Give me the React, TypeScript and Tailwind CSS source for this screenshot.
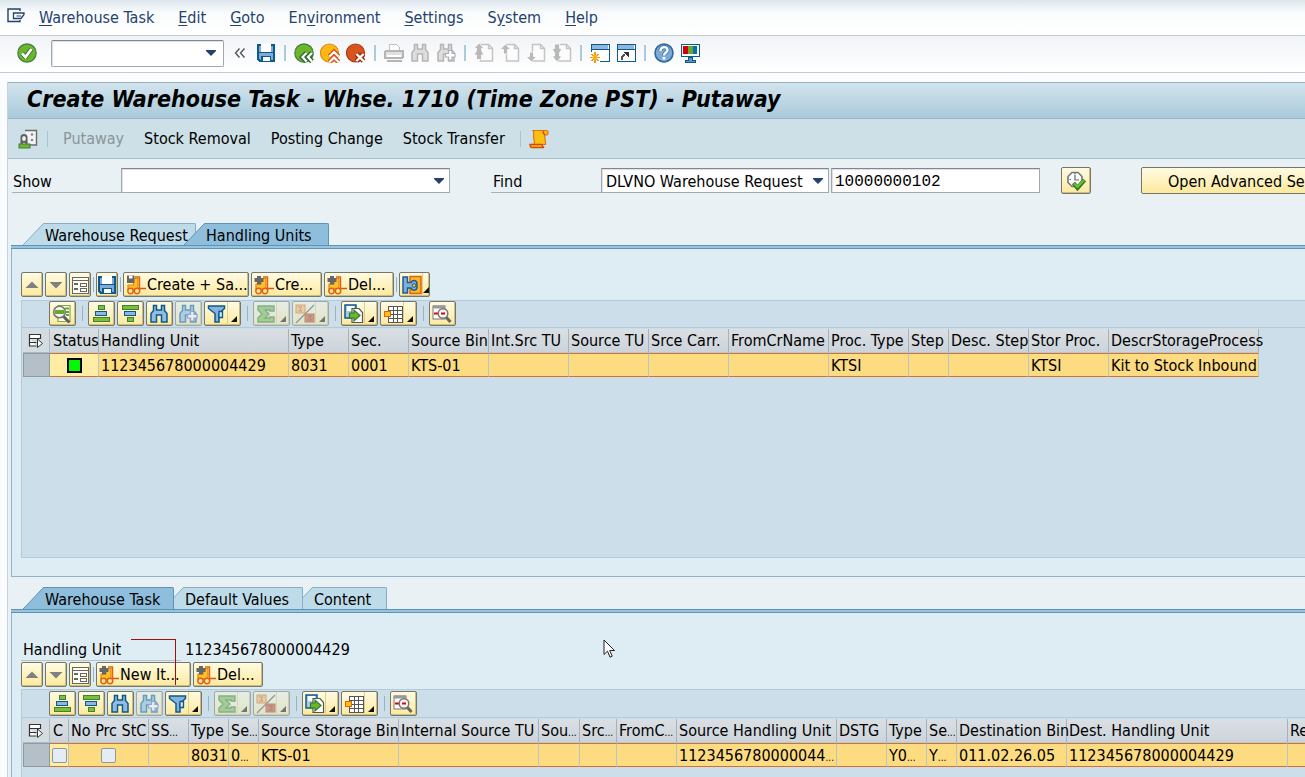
import type { ReactNode } from "react";
import clsx from "clsx";

interface IconProps {
  children: ReactNode;
  crisp?: boolean;
}

function Icon({ children, crisp }: IconProps) {
  return (
    <svg width="20" height="20" viewBox="0 0 20 20" fill="none" className="shrink-0" shapeRendering={crisp ? "crispEdges" : "auto"} aria-hidden="true">
      {children}
    </svg>
  );
}

/* ---------- icons ---------- */

const CheckIcon = () => (
  <Icon>
    <circle cx="10" cy="10" r="9.2" fill="#6db52c" stroke="#3f7f3f" strokeWidth="1.2" />
    <path d="M5 10.5L8.500 14L14.500 6" stroke="#2f6b2f" strokeWidth="4.4" strokeLinejoin="round" />
    <path d="M5 10.5L8.500 14L14.500 6" stroke="#fff" strokeWidth="2.8" />
  </Icon>
);

const SaveIcon = () => (
  <Icon crisp>
    <path d="M2 2h16v16H4l-2-2z" fill="#7fa9d6" stroke="#0b5a8e" strokeWidth="2" />
    <rect x="5" y="1" width="10" height="9" fill="#fff" />
    <rect x="3" y="9" width="14" height="1" fill="#0b5a8e" />
    <rect x="5" y="13" width="10" height="5" fill="#0b5a8e" />
    <rect x="7" y="14" width="7" height="4" fill="#fff" />
  </Icon>
);

const BackIcon = () => (
  <Icon>
    <circle cx="10" cy="10" r="9.2" fill="#6db52c" stroke="#3f7f3f" strokeWidth="1.2" />
    <path d="M12.500 10l-4 4 4 4.500M18 10l-4 4 4 4.500" stroke="#2f6b2f" strokeWidth="5" />
    <path d="M12.500 10l-4 4 4 4.500M18 10l-4 4 4 4.500" stroke="#fff" strokeWidth="2.2" />
  </Icon>
);

const ExitIcon = () => (
  <Icon>
    <circle cx="9.5" cy="10" r="9" fill="#fdb913" stroke="#e08a10" strokeWidth="1.2" />
    <path d="M9.500 13.500l4.500-4.500 4.500 4.500M9.500 19l4.500-4.500 4.500 4.500" stroke="#d9541a" strokeWidth="5" />
    <path d="M9.500 13.500l4.500-4.500 4.500 4.500M9.500 19l4.500-4.500 4.500 4.500" stroke="#fff" strokeWidth="2.2" />
  </Icon>
);

const CancelIcon = () => (
  <Icon>
    <circle cx="9.5" cy="10" r="9" fill="#d9531e" stroke="#b03a10" strokeWidth="1.2" />
    <path d="M10.500 11l7 7M17.500 11l-7 7" stroke="#a02c08" strokeWidth="5" />
    <path d="M10.500 11l7 7M17.500 11l-7 7" stroke="#fff" strokeWidth="2.4" />
  </Icon>
);

const PrintIcon = () => (
  <Icon crisp>
    <path d="M5 7V1h7l3 3v4" fill="#fff" stroke="#c0c0c0" />
    <rect x="1" y="8" width="18" height="7" rx="1" fill="#e0e0e0" stroke="#b5b5b5" strokeWidth="2" />
    <rect x="3" y="12" width="14" height="2" fill="#fff" />
    <rect x="3" y="17" width="15" height="2" fill="#b5b5b5" />
  </Icon>
);

function BinocularShape({ stroke, fill }: { stroke: string; fill: string }) {
  return (
    <path
      d="M4.500 1.500h3v4.500h5V1.500h3v5l2.500 3v8.500h-5.500V11h-5v7H2V9.500l2.500-3z"
      fill={fill}
      stroke={stroke}
      strokeWidth="1.5"
    />
  );
}

const FindIcon = ({ gray }: { gray?: boolean }) => (
  <Icon>
    <BinocularShape stroke={gray ? "#b5b5b5" : "#0b5a8e"} fill={gray ? "#dddddd" : "#93bce0"} />
  </Icon>
);

const FindNextIcon = ({ gray }: { gray?: boolean }) => (
  <Icon>
    <BinocularShape stroke={gray ? "#b5b5b5" : "#0b5a8e"} fill={gray ? "#dddddd" : "#93bce0"} />
    <path d="M12.500 7.500h3.500v3h3v3.500h-3v3h-3.500v-3h-3v-3.500h3z" fill="#fff" stroke={gray ? "#b0b0b0" : "#5d6db0"} strokeWidth="1.2" />
  </Icon>
);

function PageIcon({ arrows }: { arrows: string }) {
  return (
    <Icon>
      <path d="M6.500 1.500h8l4 4v12.500h-12z" fill="#fcfcfc" stroke="#c4c4c4" strokeWidth="1.5" />
      <path d="M14.500 1.500v4h4" stroke="#c4c4c4" strokeWidth="1.5" />
      <path d={arrows} fill="#b9b9b9" stroke="#fff" strokeWidth="0.8" />
    </Icon>
  );
}

const FirstPageIcon = () => <PageIcon arrows="M5 0l5 5.500H7.500v2L10 12H7.500v4.500h-5V12H0l2.500-4.500v-2H0z" />;
const PrevPageIcon = () => <PageIcon arrows="M5.500 1l5 5.500h-3V11h-4V6.500H0z" />;
const NextPageIcon = () => <PageIcon arrows="M3.500 9h4v4.500h3l-5 5.500L0 13.500h3.500z" />;
const LastPageIcon = () => <PageIcon arrows="M2.500 1h5v4.500H10L7.500 10v3H10l-5 6-5-6h2.500v-3L0 5.500h2.500z" />;

const NewSessionIcon = () => (
  <Icon crisp>
    <rect x="1" y="1" width="18" height="17" fill="#fff" stroke="#0b5a8e" strokeWidth="1" />
    <rect x="2" y="2" width="16" height="4" fill="#8db7de" />
    <rect x="1" y="6" width="18" height="1" fill="#0b5a8e" />
    <rect x="0" y="9" width="10" height="10" fill="#fff" />
    <path d="M5 9v11M0 14.500h10M1.500 11l7 7M8.500 11l-7 7" stroke="#f39a12" strokeWidth="1.5" />
    <circle cx="5" cy="14.5" r="2.5" fill="#f9b01e" />
  </Icon>
);

const ShortcutIcon = () => (
  <Icon crisp>
    <rect x="1" y="1" width="18" height="17" fill="#fff" stroke="#0b5a8e" strokeWidth="1" />
    <rect x="2" y="2" width="16" height="4" fill="#8db7de" />
    <rect x="1" y="6" width="18" height="1" fill="#0b5a8e" />
    <path d="M6 17c-1-3.500 1-5 3-5" stroke="#555" strokeWidth="2" />
    <path d="M7 9h5.500v5.500z" fill="#333" />
  </Icon>
);

const HelpIcon = () => (
  <Icon>
    <circle cx="10" cy="10" r="9" fill="#7da9d4" stroke="#2a6a9c" strokeWidth="1.6" />
    <path d="M6.500 8c0-5 7-5 7-1 0 2.500-3.500 2.500-3.500 5.500" stroke="#3a6ea5" strokeWidth="4" />
    <path d="M6.500 8c0-5 7-5 7-1 0 2.500-3.500 2.500-3.500 5.500" stroke="#fff" strokeWidth="2.4" />
    <rect x="8.7" y="14" width="2.6" height="2.6" fill="#fff" />
  </Icon>
);

const MonitorIcon = () => (
  <Icon crisp>
    <rect x="1" y="1" width="18" height="12" fill="#fff" stroke="#0b5a8e" strokeWidth="1" />
    <rect x="3" y="3" width="5" height="8" fill="#d40000" />
    <rect x="8" y="3" width="5" height="8" fill="#6aa82a" />
    <rect x="13" y="3" width="4" height="8" fill="#0070b8" />
    <path d="M8 14h4v3h3v2H5v-2h3z" fill="#5c93c0" stroke="#0b5a8e" />
  </Icon>
);

const ExitMenuIcon = () => (
  <svg width="19" height="15" viewBox="0 0 19 15" fill="none" aria-hidden="true">
    <path d="M13 3V1H1v12.500h12V12" stroke="#24426b" strokeWidth="1.4" />
    <path d="M6.500 5h10.500v1.500l-3 4H6.500z" fill="#fff" stroke="#24426b" strokeWidth="1.3" />
    <path d="M9.500 8h4.500" stroke="#24426b" />
  </svg>
);

const PersonCardIcon = () => (
  <Icon>
    <path d="M7 1.500h11.500v14.500H11" fill="#f4f4f4" stroke="#6b6b6b" strokeWidth="1.4" />
    <circle cx="14" cy="5.500" r="1.3" fill="#8a8a8a" />
    <circle cx="14" cy="11" r="1.3" fill="#8a8a8a" />
    <path d="M2.500 15V8c0-4 7-4 7 0v7z" fill="#5f5f5f" />
    <ellipse cx="6" cy="9.500" rx="1.9" ry="2.6" fill="#f0f0f0" />
    <path d="M4 15.500l2-2 2 2z" fill="#fff" />
    <rect x="1" y="15" width="11" height="4" fill="#6db52c" stroke="#3f7f3f" />
  </Icon>
);

const ScrollIcon = () => (
  <Icon>
    <path d="M4 1.500h13.500c2 0 2 4.500 0 4.500H16c-1 3 1 6 .5 9.500H5c1.500-3-.5-5-.5-8S5.500 4 4 1.500z" fill="#fdc010" stroke="#e0701a" strokeWidth="1.2" />
    <path d="M14.500 2c-.5 1.500 0 3 1.500 4" stroke="#cf4a10" strokeWidth="1.4" />
    <path d="M1 15.500h12c0 1.500 1 2.500 2 3H3c-1.500 0-2-1.500-2-3z" fill="#fdc010" stroke="#cf4a10" strokeWidth="1.4" />
  </Icon>
);

const ClockCheckIcon = () => (
  <Icon>
    <path d="M6 1.500h6l4 4v6l-4 4H6l-4-4v-6z" fill="#fff" stroke="#777" strokeWidth="1.6" />
    <path d="M9 4v5h4M9 2v1.500M3.500 8.500H5" stroke="#666" strokeWidth="1.2" />
    <path d="M7.500 12l4 5 7-8" stroke="#2f7a2f" strokeWidth="4.2" />
    <path d="M8 12.500l3.500 3.500 6.500-7" stroke="#74bd2e" strokeWidth="2.2" />
  </Icon>
);

const UpIcon = () => (
  <Icon><path d="M10 6.500l6.500 6.500h-13z" fill="#808080" /></Icon>
);

const DownIcon = () => (
  <Icon><path d="M10 13.500L3.500 7h13z" fill="#808080" /></Icon>
);

const FormIcon = () => (
  <Icon crisp>
    <rect x="2" y="2" width="16" height="16" fill="#fffdf0" stroke="#666" strokeWidth="1" />
    <path d="M2 5h16" stroke="#666" strokeWidth="1" />
    <path d="M4 9h4M4 14h4" stroke="#666" strokeWidth="2" />
    <rect x="10" y="8" width="6" height="3" stroke="#666" />
    <rect x="10" y="13" width="6" height="3" stroke="#666" />
  </Icon>
);

const ForkliftIcon = () => (
  <Icon>
    <path d="M9 2h4.500v13" stroke="#e0620f" strokeWidth="1.4" />
    <path d="M2 9h5V3.500h5V14H2z" fill="#fdbf2a" stroke="#e8820f" strokeWidth="1.2" />
    <path d="M14 13.500h6" stroke="#d9541a" strokeWidth="1.5" />
    <circle cx="4.5" cy="16" r="2.7" fill="#ffe9a0" stroke="#e0620f" strokeWidth="1.5" />
    <circle cx="11" cy="16" r="2.7" fill="#ffe9a0" stroke="#e0620f" strokeWidth="1.5" />
    <path d="M3 1h4v2h2.500v4H7v2.500H3V7H.5V3H3z" fill="#666" />
  </Icon>
);

const ForkliftSaveIcon = () => (
  <Icon>
    <path d="M9 2h4.500v13" stroke="#e0620f" strokeWidth="1.4" />
    <path d="M2 10h5.500V3.500H12V14H2z" fill="#fdbf2a" stroke="#e8820f" strokeWidth="1.2" />
    <path d="M14 13.500h6" stroke="#d9541a" strokeWidth="1.5" />
    <circle cx="4.5" cy="16" r="2.7" fill="#ffe9a0" stroke="#e0620f" strokeWidth="1.5" />
    <circle cx="11" cy="16" r="2.7" fill="#ffe9a0" stroke="#e0620f" strokeWidth="1.5" />
    <path d="M1 .5h7.500V8H1z" fill="#666" />
    <path d="M3 .5h3.500v3H3z" fill="#fff" />
  </Icon>
);

const TransferIcon = () => (
  <Icon>
    <rect x="8" y="1.500" width="11" height="17" fill="#fdb920" stroke="#e0620f" strokeWidth="1.5" />
    <path d="M1 2h4.500v5.500H9c1-3 6-3 6 1.500v3c0 4-5 4-6 1H5.500v5H1z" fill="#7fb0dc" stroke="#1b5c92" strokeWidth="1.5" />
    <circle cx="12" cy="10.5" r="1.8" fill="#fdb920" stroke="#1b5c92" />
  </Icon>
);

const DetailIcon = () => (
  <Icon>
    <path d="M6 1.500h12v16H6z" fill="#fff" stroke="#7fae3a" strokeWidth="1.2" />
    <path d="M13 4.500h4M14 8h3M14 11h3" stroke="#6aa82a" strokeWidth="1.8" />
    <path d="M11.500 12.500l6 6" stroke="#5f5f5f" strokeWidth="3" />
    <circle cx="7.5" cy="8" r="5.8" fill="#f3f3f3" stroke="#777" strokeWidth="1.6" />
    <path d="M3 6h9.500v4H3z" fill="#6aa82a" />
  </Icon>
);

const SortAscIcon = () => (
  <Icon crisp>
    <rect x="7" y="1" width="6" height="4" fill="#7cbf33" stroke="#3f7f3f" />
    <rect x="4" y="7" width="11" height="4" fill="#8db7de" stroke="#0b5a8e" />
    <rect x="2" y="13" width="16" height="4" fill="#7cbf33" stroke="#3f7f3f" />
  </Icon>
);

const SortDescIcon = () => (
  <Icon crisp>
    <rect x="2" y="1" width="16" height="4" fill="#7cbf33" stroke="#3f7f3f" />
    <rect x="4" y="7" width="11" height="4" fill="#8db7de" stroke="#0b5a8e" />
    <rect x="7" y="13" width="6" height="4" fill="#7cbf33" stroke="#3f7f3f" />
  </Icon>
);

const FilterIcon = () => (
  <Icon>
    <path d="M1.500 2h16v2.500l-5.500 5V18H8V9.500l-6.500-5z" fill="#86b2dc" stroke="#0b5a8e" strokeWidth="1.5" />
    <path d="M12 7.500h3.500v6H12z" fill="#d6e6f4" stroke="#0b5a8e" strokeWidth="1.3" />
  </Icon>
);

const SumIcon = () => (
  <Icon>
    <path d="M2 2h16v5h-4V6H9l4 4-4 4h5v-1h4v5H2v-4l4-4-4-4z" fill="#7cbf33" stroke="#3f7f3f" strokeWidth="1.4" />
  </Icon>
);

const SubtotalIcon = () => (
  <Icon>
    <path d="M19 1L1 19" stroke="#555" strokeWidth="1.3" />
    <rect x="1" y="1" width="9" height="8" fill="#fdc060" stroke="#e0700f" />
    <path d="M3 3h4l-2 2 2 2H3" stroke="#d0601a" />
    <rect x="10" y="10" width="9" height="8" fill="#d9531e" stroke="#a83a10" />
    <path d="M12.500 12h4l-2 2 2 2h-4" stroke="#8a2a10" />
  </Icon>
);

const ExportIcon = () => (
  <Icon>
    <rect x="1" y="1" width="11" height="13" fill="#a9cbe8" stroke="#0b5a8e" strokeWidth="1.5" />
    <rect x="3" y="2" width="7" height="5" fill="#fff" />
    <path d="M8 18.500V4.500h7l3.500 4v10z" fill="#fff" stroke="#555" strokeWidth="1.2" />
    <path d="M5.500 9h4.500V6l6 5.500-6 5.500v-3H5.500z" fill="#6db52c" stroke="#2f7a2f" strokeWidth="1.2" />
  </Icon>
);

const LayoutIcon = () => (
  <Icon crisp>
    <path d="M5 2h14v16H5z" fill="#fff" stroke="#555" />
    <path d="M5 6h14M5 10h14M5 14h14M10 2v16M14 2v16" stroke="#555" />
    <rect x="1" y="7" width="6" height="5" fill="#fdc010" stroke="#e0620f" strokeWidth="1" />
  </Icon>
);

const ViewIcon = () => (
  <Icon>
    <rect x="1" y="2" width="12" height="13" fill="#fff" stroke="#777" strokeWidth="1" />
    <rect x="1" y="1.500" width="12" height="3" fill="#999" />
    <path d="M2 9.500h4" stroke="#e00000" strokeWidth="2" />
    <path d="M14 13l4.500 5" stroke="#666" strokeWidth="3" />
    <circle cx="11" cy="9.5" r="4.8" fill="#f6f6f6" stroke="#777" strokeWidth="1.5" />
    <path d="M9 9.500h4" stroke="#e00000" strokeWidth="2" />
  </Icon>
);

const SelectAllIcon = () => (
  <svg width="16" height="16" viewBox="0 0 16 16" fill="none" className="mx-auto" aria-hidden="true">
    <path d="M1.500 1.500h11v4h-11zM1.500 5.500v7.500h7M1.500 9.500h7" fill="#fff" stroke="#333" strokeWidth="1.2" />
    <path d="M9.500 6l5 4.500-5 4z" fill="#fff" stroke="#333" />
  </svg>
);

/* ---------- controls ---------- */

interface ToolButtonProps {
  name: string;
  icon: ReactNode;
  label?: string;
  size?: "narrow" | "normal" | "split";
  menu?: boolean;
  disabled?: boolean;
  className?: string;
}

function ToolButton({ name, icon, label, size = "normal", menu, disabled, className }: ToolButtonProps) {
  return (
    <button
      type="button"
      aria-label={name}
      disabled={disabled}
      className={clsx(
        "flex h-[25px] shrink-0 items-center rounded-[2px] border border-[#77766a] bg-linear-to-b from-[#fffbe2] to-[#fde99c] shadow-[inset_-1px_-1px_0_#c9bd83]",
        size === "narrow" && "w-[22px]",
        !label && !className && size === "normal" && "w-[27px]",
        size === "split" && "w-[37px]",
        size !== "narrow" && "px-[2px]",
        disabled && "opacity-50",
        className
      )}
    >
      {icon}
      {label && <span className="pl-px whitespace-nowrap">{label}</span>}
      {menu && (
        <span className="flex h-full flex-1 items-end justify-end border-l border-[#e0cf8c] pr-px pb-[3px]">
          <svg width="6" height="6" viewBox="0 0 6 6" aria-hidden="true"><path d="M6 0v6H0z" fill="#111" /></svg>
        </span>
      )}
    </button>
  );
}

const Divider = () => <span className="h-[15px] w-px shrink-0 bg-[#9fb0bb]" />;
const BarSeparator = () => <span className="mx-[2px] h-4 w-[2px] bg-[#a9cadf]" />;

const GridSeparator = () => (
  <span className="flex h-[25px] w-2 shrink-0 items-center justify-center"><Divider /></span>
);

function IconButton({ name, children, disabled }: { name: string; children: ReactNode; disabled?: boolean }) {
  return <button type="button" aria-label={name} disabled={disabled}>{children}</button>;
}

function GridToolbar({ details }: { details?: boolean }) {
  return (
    <div className="flex h-[27px] items-start gap-[2px] border-b border-[#b3cad8] pl-[27px]">
      {details && (
        <>
          <ToolButton name="Details" icon={<DetailIcon />} />
          <GridSeparator />
        </>
      )}
      <ToolButton name="Sort ascending" icon={<SortAscIcon />} />
      <ToolButton name="Sort descending" icon={<SortDescIcon />} />
      <ToolButton name="Find" icon={<FindIcon />} />
      <ToolButton name="Find next" icon={<FindNextIcon />} disabled />
      <ToolButton name="Filter" icon={<FilterIcon />} size="split" menu />
      <GridSeparator />
      <ToolButton name="Total" icon={<SumIcon />} size="split" menu disabled />
      <ToolButton name="Subtotal" icon={<SubtotalIcon />} size="split" menu disabled />
      <GridSeparator />
      <ToolButton name="Export" icon={<ExportIcon />} size="split" menu />
      <ToolButton name="Change layout" icon={<LayoutIcon />} size="split" menu />
      <GridSeparator />
      <ToolButton name="Views" icon={<ViewIcon />} />
    </div>
  );
}

function Tab({ label, active, className }: { label: string; active?: boolean; className: string }) {
  const fill = active ? "#8fbddc" : "#bddbe9";
  const stroke = active ? "#5f93b5" : "#86adc4";
  return (
    <button type="button" role="tab" aria-selected={!!active} className={clsx("flex h-[22px]", className)}>
      <svg width="21" height="22" viewBox="0 0 21 22" className="shrink-0" aria-hidden="true">
        <path d="M0 22L3 19L19 2Q20 0.500 21 0.500V22z" fill={fill} />
        <path d="M0 22L3 19L19 2Q20 0.500 21 0.500" fill="none" stroke={stroke} />
      </svg>
      <span
        className={clsx(
          "h-full flex-1 rounded-tr-[2px] border-t border-r pl-px text-left leading-[23px] whitespace-nowrap",
          active ? "border-[#5f93b5] bg-[#8fbddc]" : "border-[#86adc4] bg-[#bddbe9]"
        )}
      >
        {label}
      </span>
    </button>
  );
}

const TabLine = () => <div className="h-1 shrink-0 border-y border-[#5f93b5] bg-[#98c4e0]" />;

interface Column {
  title: string;
  width: number;
  value?: ReactNode;
  cut?: boolean;
  valueCut?: boolean;
  pale?: boolean;
}

const unitColumns: Column[] = [
  { title: "Status", width: 49, value: <span className="mx-auto block size-[15px] border-2 border-black bg-[#00f800]" />, pale: true },
  { title: "Handling Unit", width: 190, value: "112345678000004429" },
  { title: "Type", width: 60, value: "8031" },
  { title: "Sec.", width: 60, value: "0001" },
  { title: "Source Bin", width: 80, value: "KTS-01" },
  { title: "Int.Src TU", width: 80 },
  { title: "Source TU", width: 80 },
  { title: "Srce Carr.", width: 80 },
  { title: "FromCrName", width: 100 },
  { title: "Proc. Type", width: 80, value: "KTSI" },
  { title: "Step", width: 40 },
  { title: "Desc. Step", width: 80 },
  { title: "Stor Proc.", width: 80, value: "KTSI" },
  { title: "DescrStorageProcess", width: 150, value: "Kit to Stock Inbound" },
];

function CellCheckbox({ name }: { name: string }) {
  return <input type="checkbox" aria-label={name} className="mx-auto block size-[15px] appearance-none rounded-[2px] border border-[#8b99a3] bg-[#e3edf3]" />;
}

const taskColumns: Column[] = [
  { title: "C", width: 19, value: <CellCheckbox name="Confirmed" />, pale: true },
  { title: "No Prc StC", width: 80, value: <CellCheckbox name="No process step" /> },
  { title: "SS", cut: true, width: 40 },
  { title: "Type", width: 40, value: "8031" },
  { title: "Se", cut: true, width: 30, value: "0", valueCut: true },
  { title: "Source Storage Bin", width: 140, value: "KTS-01" },
  { title: "Internal Source TU", width: 140 },
  { title: "Sou", cut: true, width: 41 },
  { title: "Src", cut: true, width: 37 },
  { title: "FromC", cut: true, width: 60 },
  { title: "Source Handling Unit", width: 160, value: "1123456780000044", valueCut: true },
  { title: "DSTG", width: 50 },
  { title: "Type", width: 40, value: "Y0", valueCut: true },
  { title: "Se", cut: true, width: 30, value: "Y", valueCut: true },
  { title: "Destination Bin", width: 110, value: "011.02.26.05" },
  { title: "Dest. Handling Unit", width: 221, value: "112345678000004429" },
  { title: "Resource", width: 80 },
];

const Dots = () => <span className="text-[10px] leading-none">...</span>;

function DataGrid({ columns }: { columns: Column[] }) {
  const total = columns.reduce((sum, col) => sum + col.width, 27);
  return (
    <div className="overflow-hidden pt-px pl-px">
      <table className="table-fixed border-separate border-spacing-0 leading-[21px]" style={{ width: total }}>
        <colgroup>
          <col style={{ width: 27 }} />
          {columns.map((col, i) => (
            <col key={i} style={{ width: col.width }} />
          ))}
        </colgroup>
        <thead>
          <tr className="h-[24px]">
            <th aria-label="Select all" className="border-r border-b border-[#a9bac6] bg-[#d3dce1] p-0"><SelectAllIcon /></th>
            {columns.map((col, i) => (
              <th
                key={i}
                className={clsx(
                  "border-r border-b border-r-[#a3b2bb] border-b-[#b5c9d6] bg-linear-to-b from-[#dadfe3] to-[#ccd4db] p-0 text-left font-normal whitespace-nowrap",
                  col.pale ? "pl-[3px]" : "pl-[2px]"
                )}
              >
                {col.title}
                {col.cut && <Dots />}
              </th>
            ))}
          </tr>
        </thead>
        <tbody>
          <tr className="h-[24px]">
            <td className="border border-[#8f9ba4] bg-[#b5bfc7] p-0" />
            {columns.map((col, i) => (
              <td
                key={i}
                className={clsx(
                  "border-y border-r border-y-[#cf7430] border-r-[#b9c6c9] p-0 whitespace-nowrap",
                  typeof col.value === "string" && "pl-[2px]",
                  col.pale ? "bg-[#ffeda3]" : "bg-[#fddb80]"
                )}
              >
                {col.value}
                {col.valueCut && <Dots />}
              </td>
            ))}
          </tr>
        </tbody>
      </table>
    </div>
  );
}

function SelectArrow() {
  return (
    <svg width="10" height="6" viewBox="0 0 10 6" className="pointer-events-none absolute top-[10px] right-[6px]" aria-hidden="true">
      <path d="M0 0h10v1L5 6L0 1z" fill="#24426b" />
    </svg>
  );
}

const menus = [
  ["", "W", "arehouse Task"],
  ["", "E", "dit"],
  ["", "G", "oto"],
  ["En", "v", "ironment"],
  ["", "S", "ettings"],
  ["S", "y", "stem"],
  ["", "H", "elp"],
];

const fieldClass = "border border-[#a2a9ad] border-t-[#80868b] bg-white shadow-[inset_1px_1px_1px_#dcdfe1]";

function MenuBar() {
  return (
    <nav className="flex h-9 shrink-0 items-center gap-6 border-b border-[#c3ccd3] bg-linear-to-b from-[#dde6ed] via-[#f9fbfc] via-35% to-white pl-[7px] text-[#24426b]">
      <button type="button" aria-label="Menu" className="-mr-[11px] pb-[5px]"><ExitMenuIcon /></button>
      {menus.map(([before, key, after]) => (
        <button type="button" key={before + key + after} className="whitespace-nowrap">
          {before}<span className="underline underline-offset-2">{key}</span>{after}
        </button>
      ))}
    </nav>
  );
}

function SystemToolbar() {
  return (
    <div className="flex h-[37px] shrink-0 items-center gap-[6px] border-b border-[#c3ccd3] bg-linear-to-b from-[#f1f4f7] to-white pb-[2px] pl-[17px]">
      <IconButton name="Enter"><CheckIcon /></IconButton>
      <div className="relative mt-px ml-2">
        <input aria-label="Command" className={clsx("block h-[27px] w-[173px] rounded-[2px] px-1", fieldClass)} />
        <svg width="10" height="6" viewBox="0 0 10 6" className="pointer-events-none absolute top-[10px] right-2" aria-hidden="true">
          <path d="M0 0h10v1L5 6L0 1z" fill="#24426b" />
        </svg>
      </div>
      <button type="button" aria-label="Collapse" className="mx-1">
        <svg width="12" height="10" viewBox="0 0 12 10" fill="none" aria-hidden="true">
          <path d="M5.500 0.500L1.500 5l4 4.500M10.500 0.500L6.500 5l4 4.500" stroke="#555" strokeWidth="1.4" />
        </svg>
      </button>
      <IconButton name="Save"><SaveIcon /></IconButton>
      <BarSeparator />
      <IconButton name="Back"><BackIcon /></IconButton>
      <IconButton name="Exit"><ExitIcon /></IconButton>
      <IconButton name="Cancel"><CancelIcon /></IconButton>
      <BarSeparator />
      <IconButton name="Print" disabled><PrintIcon /></IconButton>
      <IconButton name="Find" disabled><FindIcon gray /></IconButton>
      <IconButton name="Find next" disabled><FindNextIcon gray /></IconButton>
      <BarSeparator />
      <IconButton name="First page" disabled><FirstPageIcon /></IconButton>
      <IconButton name="Previous page" disabled><PrevPageIcon /></IconButton>
      <IconButton name="Next page" disabled><NextPageIcon /></IconButton>
      <IconButton name="Last page" disabled><LastPageIcon /></IconButton>
      <BarSeparator />
      <IconButton name="New session"><NewSessionIcon /></IconButton>
      <IconButton name="Create shortcut"><ShortcutIcon /></IconButton>
      <BarSeparator />
      <IconButton name="Help"><HelpIcon /></IconButton>
      <IconButton name="Customize layout"><MonitorIcon /></IconButton>
    </div>
  );
}

function SearchRow() {
  return (
    <div className="flex items-start pt-[9px] pl-1">
      <label htmlFor="show" className="mt-px h-6 w-[109px] shrink-0 border-b border-[#a9b0b4] pl-px leading-[25px]">Show</label>
      <div className="relative shrink-0">
        <select id="show" className={clsx("block h-[25px] w-[329px] appearance-none", fieldClass)} />
        <SelectArrow />
      </div>
      <label htmlFor="find" className="mt-px ml-[41px] h-6 w-[110px] shrink-0 border-b border-[#a9b0b4] pl-[2px] leading-[25px]">Find</label>
      <div className="relative shrink-0">
        <select id="find" className={clsx("block h-[25px] w-[228px] appearance-none pt-[2px] pl-1", fieldClass)}>
          <option>DLVNO Warehouse Request</option>
        </select>
        <SelectArrow />
      </div>
      <input
        aria-label="Warehouse request number"
        defaultValue="10000000102"
        className={clsx("ml-[2px] h-[25px] w-[209px] shrink-0 px-[3px] pt-[2px] font-['Liberation_Mono',monospace] text-[16px]", fieldClass)}
      />
      <ToolButton name="Execute" icon={<ClockCheckIcon />} className="-mt-px ml-[21px] h-[27px] w-[30px] justify-center" />
      <button
        type="button"
        className="-mt-px ml-[50px] h-[27px] w-[260px] shrink-0 rounded-[2px] border border-[#77766a] bg-linear-to-b from-[#fffbe2] to-[#fde99c] pt-[2px] pl-[26px] text-left whitespace-nowrap"
      >
        Open Advanced Search
      </button>
    </div>
  );
}

export default function App() {
  return (
    <div className="flex h-screen flex-col overflow-hidden bg-[#fbfcfd] font-['DejaVu_Sans_Condensed','Noto_Sans',sans-serif] text-[16px] leading-5 text-black">
      <MenuBar />
      <SystemToolbar />

      <main className="mt-[9px] ml-[7px] flex min-h-0 flex-1 flex-col border-l border-[#c5d3de] bg-[#eaf1f4]">
        <h1 className="h-[37px] shrink-0 border-y border-t-[#93afc1] border-b-[#9bb6c6] bg-linear-to-b from-[#d3e4ec] to-[#a9cadb] pl-[19px] text-[23px] leading-[33px] font-bold whitespace-nowrap italic">
          Create Warehouse Task - Whse. 1710 (Time Zone PST) - Putaway
        </h1>
        <div className="flex h-10 shrink-0 items-center gap-5 border-b border-[#a9c0cc] bg-[#cde0e7] pl-[10px]">
          <IconButton name="User"><PersonCardIcon /></IconButton>
          <span className="-mr-[5px] -ml-[11px] h-4 w-px bg-[#a3c3d6]" />
          <button type="button" disabled className="text-[#8b959b]">Putaway</button>
          <button type="button">Stock Removal</button>
          <button type="button">Posting Change</button>
          <button type="button">Stock Transfer</button>
          <span className="-mr-3 -ml-[5px] h-4 w-px bg-[#a3c3d6]" />
          <IconButton name="Log"><ScrollIcon /></IconButton>
        </div>

        <SearchRow />

        <section className="mt-[29px] ml-[3px] shrink-0">
          <div role="tablist" className="flex pl-3">
            <Tab label="Warehouse Request" className="w-[173px]" />
            <Tab label="Handling Units" active className="-ml-3 w-[145px]" />
          </div>
          <TabLine />
          <div className="border-b border-l border-[#8fb3ca] bg-[#deecf4] pt-[23px] pb-[18px] pl-[9px]">
            <div className="flex items-center gap-[2px]">
              <ToolButton name="Scroll up" icon={<UpIcon />} size="narrow" />
              <ToolButton name="Scroll down" icon={<DownIcon />} size="narrow" />
              <ToolButton name="Form view" icon={<FormIcon />} size="narrow" />
              <Divider />
              <ToolButton name="Save" icon={<SaveIcon />} size="narrow" />
              <Divider />
              <ToolButton name="Create and save" icon={<ForkliftSaveIcon />} label="Create + Sa..." className="w-[126px]" />
              <ToolButton name="Create" icon={<ForkliftIcon />} label="Cre..." className="w-[71px]" />
              <ToolButton name="Delete" icon={<ForkliftIcon />} label="Del..." className="w-[70px]" />
              <Divider />
              <ToolButton name="Pack" icon={<TransferIcon />} menu className="w-[31px]" />
            </div>
            <div className="mt-[3px] min-h-[258px] border-y border-l border-[#b3cad8] bg-[#cbdee9]">
              <GridToolbar details />
              <DataGrid columns={unitColumns} />
            </div>
          </div>
        </section>

        <section className="mt-[10px] ml-[3px] flex min-h-0 flex-1 flex-col">
          <div role="tablist" className="flex shrink-0 pl-3">
            <Tab label="Warehouse Task" active className="z-20 w-[151px]" />
            <Tab label="Default Values" className="z-10 -ml-[11px] w-[140px]" />
            <Tab label="Content" className="-ml-[11px] w-[95px]" />
          </div>
          <TabLine />
          <div className="relative flex min-h-0 flex-1 flex-col border-l border-[#8fb3ca] bg-[#deecf4] pt-[25px] pl-[9px]">
            <div className="flex h-6 shrink-0 items-start leading-6">
              <span className="h-[23px] w-[160px] border-b border-[#b9c4ca] pl-[2px]">Handling Unit</span>
              <span className="pl-1">112345678000004429</span>
            </div>
            <div className="flex shrink-0 items-center gap-[2px]">
              <ToolButton name="Scroll up" icon={<UpIcon />} size="narrow" />
              <ToolButton name="Scroll down" icon={<DownIcon />} size="narrow" />
              <ToolButton name="Form view" icon={<FormIcon />} size="narrow" />
              <Divider />
              <ToolButton name="New item" icon={<ForkliftIcon />} label="New It..." className="w-[95px]" />
              <ToolButton name="Delete item" icon={<ForkliftIcon />} label="Del..." className="w-[70px]" />
            </div>
            <div className="mt-[2px] min-h-0 flex-1 overflow-hidden border-t border-l border-[#b3cad8] bg-[#cbdee9] pt-px">
              <GridToolbar />
              <DataGrid columns={taskColumns} />
            </div>

            <div className="pointer-events-none absolute top-[26px] left-[119px] h-[46px] w-[45px] border-t border-r border-[#a01010]" />
            <svg width="13" height="20" viewBox="0 0 13 20" className="pointer-events-none absolute top-[26px] left-[591px]" aria-hidden="true">
              <path d="M1 1v14.500l3.500-3.300 2.500 6 2.200-1-2.500-5.700h4.800z" fill="#fff" stroke="#222" />
            </svg>
          </div>
        </section>
      </main>
    </div>
  );
}
